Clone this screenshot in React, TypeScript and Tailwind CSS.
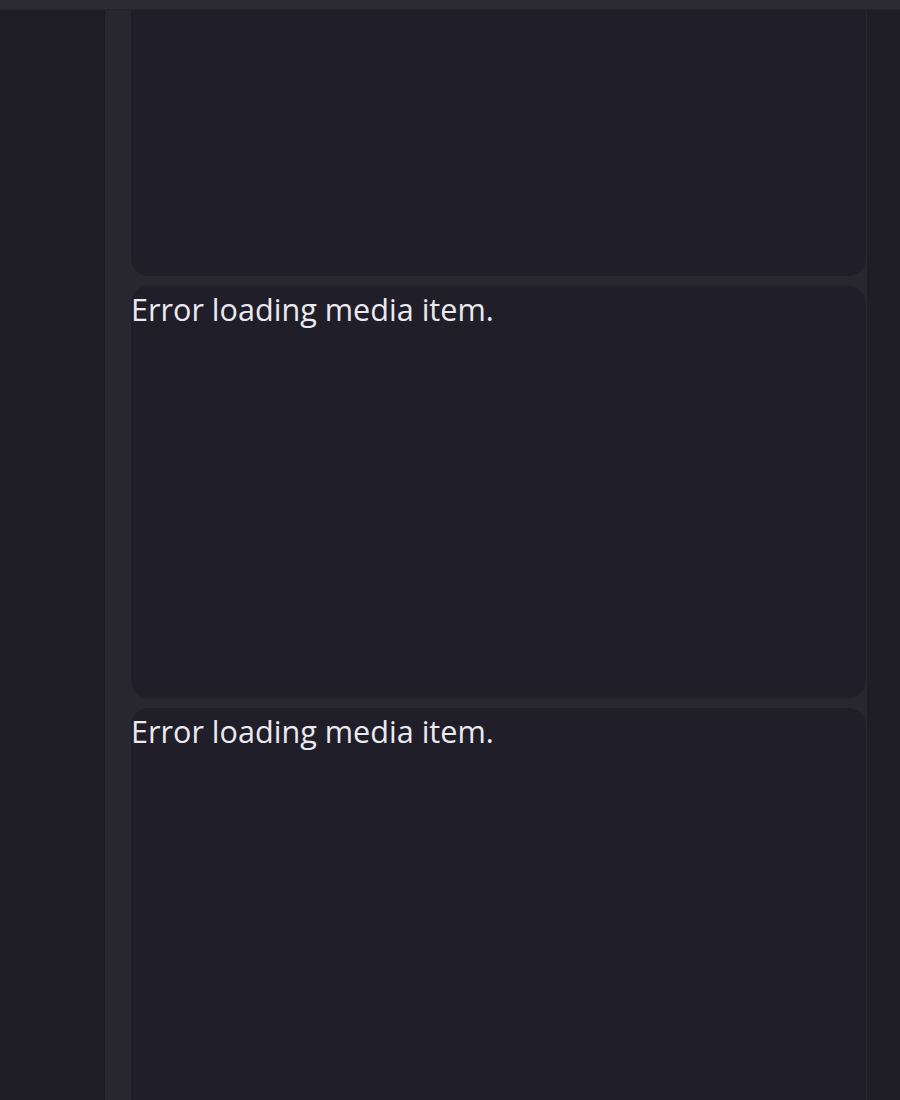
import React from 'react';

const items = [
  { id: 1, h: 'h-[266px]', first: true },
  { id: 2, h: 'h-[412px]', first: false },
  { id: 3, h: 'h-[412px]', first: false },
];

export default function App() {
  return (
    <div className="w-[900px] h-[1100px] overflow-hidden bg-[#1e1c24] flex flex-col" style={{ fontFamily: '"Open Sans", "Noto Sans", sans-serif' }}>
      {/* top bar */}
      <div className="h-[10px] shrink-0 bg-[#2b2932] border-b border-[#25232b]" />

      <div className="flex flex-1 min-h-0">
        {/* left nav */}
        <aside className="w-[105px] shrink-0 bg-[#1e1c24] border-r border-[#1a1820]" />

        {/* media column */}
        <main className="w-[761px] shrink-0 bg-[#28262e] pl-[26px] flex flex-col gap-[10px] overflow-hidden">
          {items.map((item) => (
            <div
              key={item.id}
              className={`${item.h} shrink-0 bg-[#201e28] ${item.first ? 'rounded-b-[18px]' : 'rounded-[18px]'}`}
            >
              {!item.first && (
                <p className="text-[30.6px] leading-[44px] text-[#ebe9f0] pt-[1px]">Error loading media item.</p>
              )}
            </div>
          ))}
        </main>

        {/* right rail */}
        <div className="flex-1 bg-[#1f1d25] border-l border-[#2a2830]" />
      </div>
    </div>
  );
}
